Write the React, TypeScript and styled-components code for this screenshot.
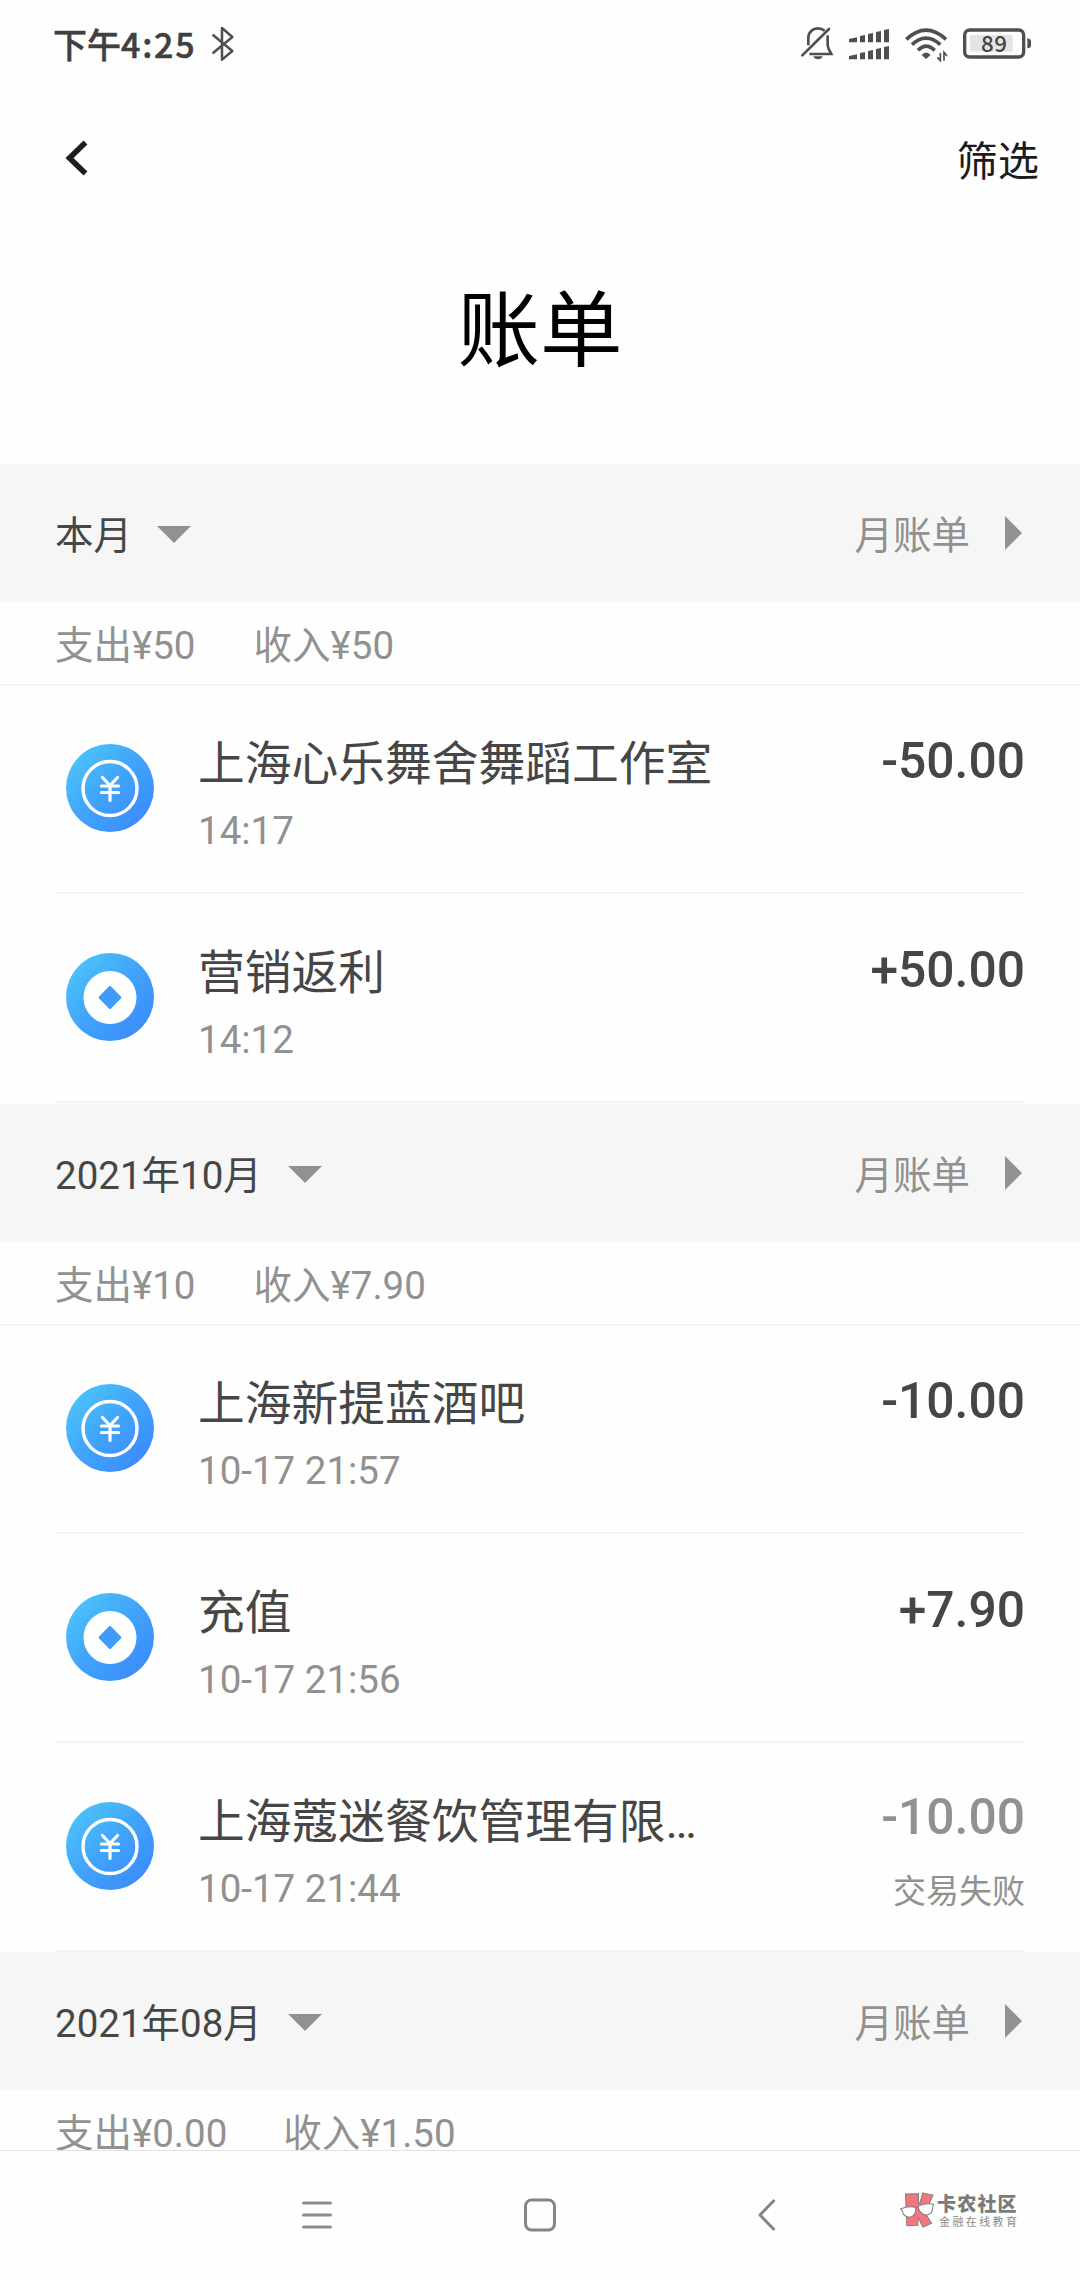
import React from "react";
import styled, { createGlobalStyle } from "styled-components";

const ink = "#464646";
const muted = "#919191";
const statusInk = "#4f4f4f";

const GlobalStyle = createGlobalStyle`
  * { box-sizing: border-box; }
  body {
    margin: 0;
    background: #fefefe;
    font-family: Roboto, "Noto Sans CJK SC", sans-serif;
    color: ${ink};
  }
`;

const Screen = styled.div`
  width: 1080px;
  height: 2280px;
  display: flex;
  flex-direction: column;
  overflow: hidden;
  background: #fefefe;
`;

const StatusBar = styled.header`
  height: 88px;
  padding: 0 40px 0 53px;
  display: flex;
  align-items: center;
  justify-content: space-between;
`;

const StatusGroup = styled.div<{ $gap: number }>`
  display: flex;
  align-items: center;
  gap: ${(p) => p.$gap}px;
`;

const Clock = styled.span`
  font-family: "Noto Sans CJK SC", sans-serif;
  font-size: 34px;
  line-height: 48px;
  font-weight: 500;
  color: #404040;
  white-space: nowrap;
  -webkit-text-stroke: 0.5px #404040;
`;

const ClockDigits = styled.span`
  letter-spacing: 1.8px;
`;

const Glyph = styled.svg`
  display: block;
  flex: none;
`;

const TitleBar = styled.div`
  height: 140px;
  padding: 0 41px 0 63px;
  display: flex;
  align-items: center;
  justify-content: space-between;
`;

const FilterButton = styled.button`
  border: 0;
  padding: 7px 0 0;
  background: none;
  font: 400 41.25px/56px Roboto, "Noto Sans CJK SC", sans-serif;
  color: #1c1c1c;
`;

const PageTitle = styled.h1`
  height: 236px;
  margin: 0;
  padding-top: 44px;
  text-align: center;
  font-size: 82.5px;
  line-height: 120px;
  font-weight: 400;
  color: #000;
`;

const Bills = styled.main`
  flex: 1;
  min-height: 0;
  overflow: hidden;
`;

const Month = styled.section<{ $overlap?: boolean }>`
  margin-top: ${(p) => (p.$overlap ? -1 : 0)}px;
`;

const MonthBar = styled.div`
  height: 138px;
  padding: 0 58px 0 55px;
  display: flex;
  align-items: center;
  justify-content: space-between;
  background: #f6f6f6;
`;

const MonthPart = styled.div<{ $gap: number; $color: string }>`
  display: flex;
  align-items: center;
  gap: ${(p) => p.$gap}px;
  color: ${(p) => p.$color};
`;

const MonthText = styled.span`
  padding-top: 6px;
  font-size: 38.5px;
  line-height: 54px;
`;

const Down = styled.i<{ $nudge: number }>`
  margin: 3px 0 0 ${(p) => p.$nudge}px;
  border: solid transparent;
  border-width: 17px 17px 0;
  border-top-color: ${muted};
`;

const Right = styled.i`
  border: solid transparent;
  border-width: 17px 0 17px 17px;
  border-left-color: ${muted};
`;

const Summary = styled.div<{ $gap: number }>`
  height: 84px;
  padding: 6px 55px 0;
  display: flex;
  align-items: center;
  gap: ${(p) => p.$gap}px;
  border-bottom: 2px solid #f3f3f3;
  font-size: 38.5px;
  line-height: 54px;
  color: ${muted};
`;

const Row = styled.article`
  height: 209px;
  padding: 0 55px 1px;
`;

const RowBody = styled.div`
  height: 208px;
  padding-left: 11px;
  display: flex;
  border-bottom: 2px solid #f3f3f3;
`;

const Badge = styled.svg`
  flex: none;
  width: 88px;
  height: 88px;
  margin-top: 58px;
`;

const Details = styled.div`
  flex: 1;
  min-width: 0;
  padding: 46px 0 0 44px;
`;

const Name = styled.div`
  font-size: 46.75px;
  line-height: 64px;
  white-space: nowrap;
`;

const Time = styled.div`
  margin-top: 8px;
  font-size: 38.5px;
  line-height: 54px;
  color: ${muted};
`;

const Money = styled.div<{ $failed?: boolean }>`
  padding-top: ${(p) => (p.$failed ? 43 : 45)}px;
  text-align: right;
  color: ${(p) => (p.$failed ? muted : ink)};
`;

const Amount = styled.div`
  font-size: 49.75px;
  line-height: 60px;
  font-weight: 500;
`;

const Failure = styled.div`
  margin-top: 22px;
  font-size: 33px;
  line-height: 46px;
`;

const NavBar = styled.nav`
  height: 130px;
  padding: 0 63px 0 302px;
  display: flex;
  align-items: flex-start;
  border-top: 1px solid #e2e2e2;
`;

const NavIcon = styled.svg<{ $before: number }>`
  flex: none;
  margin: 47px 0 0 ${(p) => p.$before}px;
`;

const Brand = styled.div`
  margin: 41px 0 0 auto;
  display: flex;
  gap: 3px;
`;

const BrandText = styled.div`
  font-family: "Noto Sans CJK SC", sans-serif;
  white-space: nowrap;
`;

const BrandName = styled.div`
  font-size: 19px;
  line-height: 22px;
  font-weight: 900;
  letter-spacing: 1.2px;
  margin-right: -1.2px;
  color: #7b7b7b;
`;

const BrandTag = styled.div`
  padding-left: 2px;
  font-size: 11px;
  line-height: 14px;
  letter-spacing: 2.4px;
  margin-right: -2.4px;
  color: #8c8c8c;
`;

type Kind = "yen" | "coin";

function KindBadge({ kind, id }: { kind: Kind; id: string }) {
  return (
    <Badge viewBox="0 0 88 88">
      <defs>
        <linearGradient id={id} x1="0.08" y1="0.15" x2="0.85" y2="0.9">
          <stop offset="0" stopColor="#4dc2fa" />
          <stop offset="0.5" stopColor="#40a4fa" />
          <stop offset="1" stopColor="#3c8cfa" />
        </linearGradient>
      </defs>
      <circle cx="44" cy="44" r="44" fill={`url(#${id})`} />
      {kind === "yen" ? (
        <g fill="none" stroke="#fff" strokeLinecap="round">
          <circle cx="44" cy="44.5" r="27" strokeWidth="3.4" />
          <path d="M36.500 33.500l7.500 8 7.500-8M35.500 42h17M35.500 48.500h17M44 41.500V56.500" strokeWidth="3.200" />
        </g>
      ) : (
        <>
          <circle cx="44" cy="44.500" r="26.500" fill="#fff" />
          <path
            d="M44 34.500l9.800 10-9.800 10-9.800-10z"
            fill="#409bf8"
            stroke="#409bf8"
            strokeWidth="3"
            strokeLinejoin="round"
          />
        </>
      )}
    </Badge>
  );
}

interface Entry {
  kind: Kind;
  name: string;
  time: string;
  amount: string;
  failure?: string;
}

interface MonthData {
  label: string;
  spent: string;
  earned: string;
  entries: Entry[];
}

const months: MonthData[] = [
  {
    label: "本月",
    spent: "支出¥50",
    earned: "收入¥50",
    entries: [
      { kind: "yen", name: "上海心乐舞舍舞蹈工作室", time: "14:17", amount: "-50.00" },
      { kind: "coin", name: "营销返利", time: "14:12", amount: "+50.00" },
    ],
  },
  {
    label: "2021年10月",
    spent: "支出¥10",
    earned: "收入¥7.90",
    entries: [
      { kind: "yen", name: "上海新提蓝酒吧", time: "10-17 21:57", amount: "-10.00" },
      { kind: "coin", name: "充值", time: "10-17 21:56", amount: "+7.90" },
      {
        kind: "yen",
        name: "上海蔻迷餐饮管理有限…",
        time: "10-17 21:44",
        amount: "-10.00",
        failure: "交易失败",
      },
    ],
  },
  { label: "2021年08月", spent: "支出¥0.00", earned: "收入¥1.50", entries: [] },
];

function StatusIcons() {
  return (
    <Glyph width="240" height="36" viewBox="120 80 720 108">
      <g fill="none" stroke={statusInk} strokeWidth="8">
        <path d="M127 168L207 89" strokeLinecap="round" />
        <path d="M145 138V116C145 98 158 87 174 87C182 87 189 90 194 94" />
        <path d="M203 108V136C203 148 210 156 214 164H148" />
      </g>
      <path d="M160 171h28q-3 9-14 9t-14-9z" fill={statusInk} />
      <g fill={statusInk}>
        <path d="M267 119l24-5v15h-24zM300 110l15-3v22h-15zM324 104l15-3v28h-15zM348 98l15-3v34h-15zM372 92l15-3v40h-15z" />
        <path d="M267 170l24-5v15h-24zM300 161l15-3v22h-15zM324 155l15-3v28h-15zM348 149l15-3v34h-15zM372 143l15-3v40h-15z" />
      </g>
      <g fill="none" stroke={statusInk} strokeWidth="11">
        <path d="M439 120Q498 65 558 120" />
        <path d="M456 136Q498 97 541 136" />
        <path d="M474 153Q498 128 524 153" />
      </g>
      <path d="M485 167q13-15 27 0l-14 12z" fill={statusInk} />
      <path
        d="M541 161v23l-9-10M552 184v-25l9 11"
        fill="none"
        stroke={statusInk}
        strokeWidth="5"
      />
      <rect x="614" y="92" width="177" height="81" rx="15" fill="none" stroke={statusInk} strokeWidth="10" />
      <rect x="630" y="107" width="128" height="50" fill="#e4e4e4" />
      <path d="M802 117q11 2 11 8v14q0 6-11 8z" fill={statusInk} />
      <text
        x="703"
        y="158"
        textAnchor="middle"
        fontFamily='"Noto Sans CJK SC", sans-serif'
        fontSize="67"
        fontWeight="500"
        letterSpacing="2"
        fill="#444"
      >
        89
      </text>
    </Glyph>
  );
}

function BrandMark() {
  return (
    <Glyph width="34" height="36" viewBox="1045 397 99 108" preserveAspectRatio="none">
      <path
        d="M1061 403L1099 402L1099 432L1103 430L1111 400L1141 406L1129 434L1112 450L1137 491L1112 502L1097 473L1097 497L1065 498Z"
        fill="#f4757d"
        stroke="#808080"
        strokeWidth="3"
      />
      <g fill="#fefefe" stroke="#808080" strokeWidth="3">
        <path d="M1046 448Q1068 438 1091 443Q1092 469 1073 473Q1055 472 1051 452Z" />
        <path d="M1097 440Q1119 429 1143 434L1140 442Q1141 462 1124 466Q1103 466 1097 440Z" />
      </g>
      <path d="M1090 446L1098 441" stroke="#808080" strokeWidth="3" />
    </Glyph>
  );
}

export default function App() {
  return (
    <Screen>
      <GlobalStyle />
      <StatusBar>
        <StatusGroup $gap={15}>
          <Clock>
            下午<ClockDigits>4:25</ClockDigits>
          </Clock>
          <Glyph width="24" height="36" viewBox="632 79 72 108">
            <path
              d="M639 107L696 154L665 180V85L696 112L639 159"
              fill="none"
              stroke={statusInk}
              strokeWidth="7.5"
              strokeLinejoin="round"
              strokeLinecap="round"
            />
          </Glyph>
        </StatusGroup>
        <StatusIcons />
      </StatusBar>
      <TitleBar>
        <Glyph width="27" height="38" viewBox="0 0 27 38">
          <path d="M22.500 3.500L6.500 19l16 15.500" fill="none" stroke="#1e1e1e" strokeWidth="5.6" />
        </Glyph>
        <FilterButton>筛选</FilterButton>
      </TitleBar>
      <PageTitle>账单</PageTitle>
      <Bills>
        {months.map((month, m) => (
          <Month key={month.label} $overlap={m === 2}>
            <MonthBar>
              <MonthPart $gap={24} $color={ink}>
                <MonthText>{month.label}</MonthText>
                <Down $nudge={m === 0 ? 0.5 : 2} />
              </MonthPart>
              <MonthPart $gap={35} $color={muted}>
                <MonthText>月账单</MonthText>
                <Right />
              </MonthPart>
            </MonthBar>
            <Summary $gap={m === 2 ? 56 : 58}>
              <span>{month.spent}</span>
              <span>{month.earned}</span>
            </Summary>
            {month.entries.map((entry, i) => (
              <Row key={entry.time}>
                <RowBody>
                  <KindBadge kind={entry.kind} id={`badge-${m}-${i}`} />
                  <Details>
                    <Name>{entry.name}</Name>
                    <Time>{entry.time}</Time>
                  </Details>
                  <Money $failed={!!entry.failure}>
                    <Amount>{entry.amount}</Amount>
                    {entry.failure && <Failure>{entry.failure}</Failure>}
                  </Money>
                </RowBody>
              </Row>
            ))}
          </Month>
        ))}
      </Bills>
      <NavBar>
        <NavIcon $before={0} width="30" height="34" viewBox="0 0 30 34">
          <path d="M1.500 5h27M1.500 17h27M1.500 29h27" stroke="#8c8c8c" strokeWidth="3" strokeLinecap="round" />
        </NavIcon>
        <NavIcon $before={192} width="32" height="34" viewBox="0 0 32 34">
          <rect x="1.500" y="2" width="29" height="30" rx="6" fill="none" stroke="#858585" strokeWidth="3" />
        </NavIcon>
        <NavIcon $before={202} width="18" height="34" viewBox="0 0 18 34">
          <path d="M16.500 2L2 17l14.500 15" fill="none" stroke="#858585" strokeWidth="3" strokeLinejoin="round" />
        </NavIcon>
        <Brand>
          <BrandMark />
          <BrandText>
            <BrandName>卡农社区</BrandName>
            <BrandTag>金融在线教育</BrandTag>
          </BrandText>
        </Brand>
      </NavBar>
    </Screen>
  );
}
